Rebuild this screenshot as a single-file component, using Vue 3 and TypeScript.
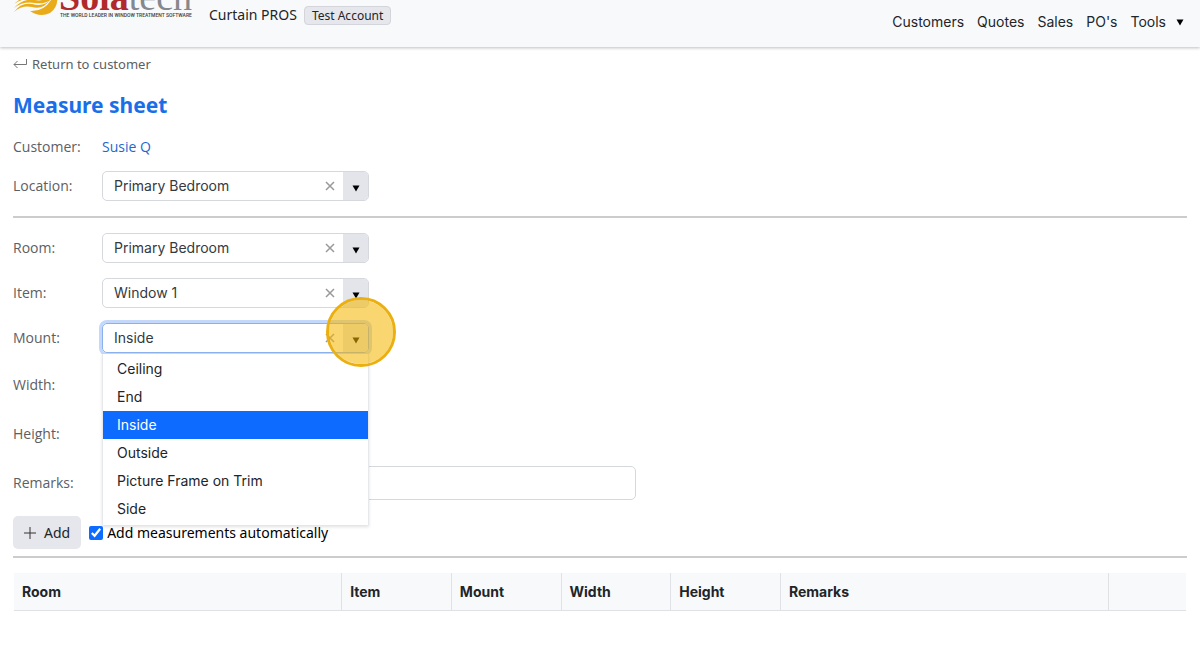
<script setup lang="ts">
import { reactive, ref } from 'vue'

type FieldKey = 'room' | 'item' | 'mount'

interface ComboField {
  key: FieldKey
  label: string
}

const navLinks: string[] = ['Customers', 'Quotes', 'Sales', "PO's"]
const location = ref('Primary Bedroom')
const fields: ComboField[] = [
  { key: 'room', label: 'Room:' },
  { key: 'item', label: 'Item:' },
  { key: 'mount', label: 'Mount:' },
]
const values = reactive<Record<FieldKey, string>>({
  room: 'Primary Bedroom',
  item: 'Window 1',
  mount: 'Inside',
})
const mountOptions: string[] = ['Ceiling', 'End', 'Inside', 'Outside', 'Picture Frame on Trim', 'Side']
const mountOpen = ref(true)
const width = ref('')
const height = ref('')
const remarks = ref('')
const autoAdd = ref(true)
const columns: string[] = ['Room', 'Item', 'Mount', 'Width', 'Height', 'Remarks', '']

function toggle(key: FieldKey): void {
  if (key === 'mount') mountOpen.value = !mountOpen.value
}

function choose(option: string): void {
  values.mount = option
  mountOpen.value = false
}
</script>

<template>
  <header class="topbar">
    <div class="brand">
      <svg class="logo" viewBox="0 0 184 42" role="img" aria-label="Solatech">
        <path class="gold" d="M1 26Q8 19 22 16L30 17Q12 19 1 26Z" />
        <path class="gold" d="M1 30Q10 20 22 22Q32 24 38 16L42 18Q34 27 22 25Q10 23 1 30Z" />
        <path class="gold" d="M1 34Q8 24 19 26Q31 29 37 22Q30 32 19 29Q9 27 1 34Z" />
        <path class="gold" d="M17 33Q34 34 41 16H44Q46 29 37 35Q27 40 17 33Z" />
        <text class="word" x="46" y="32"><tspan class="sola">Sola</tspan><tspan class="tech">tech</tspan></text>
        <text class="tagline" x="47" y="39">THE WORLD LEADER IN WINDOW TREATMENT SOFTWARE</text>
      </svg>
      <span class="company">Curtain PROS</span>
      <span class="badge">Test Account</span>
    </div>
    <nav class="nav" aria-label="Main">
      <a v-for="link in navLinks" :key="link" href="#">{{ link }}</a>
      <button type="button" class="tools">
        Tools
        <svg viewBox="0 0 8 7" aria-hidden="true"><path d="M0.5 0.5H7.5L4 6.5Z" /></svg>
      </button>
    </nav>
  </header>

  <main class="page">
    <a class="return" href="#">
      <svg viewBox="0 0 14 12" aria-hidden="true"><path d="M13.5 1V6.5H1M4.5 3L1 6.5L4.5 10" /></svg>
      Return to customer
    </a>
    <h1>Measure sheet</h1>

    <section class="group summary">
      <div class="row">
        <span class="label">Customer:</span>
        <a class="name" href="#">Susie Q</a>
      </div>
      <div class="row">
        <label class="label" for="location">Location:</label>
        <div class="combo">
          <input id="location" v-model="location" type="text" role="combobox" aria-expanded="false" />
          <button type="button" class="clear" aria-label="Clear location" @click="location = ''">
            <svg viewBox="0 0 10 10" aria-hidden="true"><path d="M1 1L9 9M9 1L1 9" /></svg>
          </button>
          <button type="button" class="arrow" aria-label="Show locations">
            <svg viewBox="0 0 8 7" aria-hidden="true"><path d="M0.5 0.5H7.5L4 6.5Z" /></svg>
          </button>
        </div>
      </div>
    </section>

    <section class="group details">
      <div v-for="field in fields" :key="field.key" class="row">
        <label class="label" :for="field.key">{{ field.label }}</label>
        <div class="combo" :class="{ focused: field.key === 'mount' }">
          <input
            :id="field.key"
            v-model="values[field.key]"
            type="text"
            role="combobox"
            :aria-expanded="field.key === 'mount' && mountOpen"
          />
          <button type="button" class="clear" :aria-label="'Clear ' + field.key" @click="values[field.key] = ''">
            <svg viewBox="0 0 10 10" aria-hidden="true"><path d="M1 1L9 9M9 1L1 9" /></svg>
          </button>
          <button type="button" class="arrow" :aria-label="'Show choices for ' + field.key" @click="toggle(field.key)">
            <svg viewBox="0 0 8 7" aria-hidden="true"><path d="M0.5 0.5H7.5L4 6.5Z" /></svg>
          </button>
          <ul v-if="field.key === 'mount' && mountOpen" class="menu" role="listbox" aria-label="Mount">
            <li
              v-for="option in mountOptions"
              :key="option"
              role="option"
              :aria-selected="option === values.mount"
              :class="{ selected: option === values.mount }"
              @click="choose(option)"
            >
              {{ option }}
            </li>
          </ul>
          <span v-if="field.key === 'mount'" class="click-ring" aria-hidden="true"></span>
        </div>
      </div>
      <div class="row">
        <label class="label" for="width">Width:</label>
        <input id="width" v-model="width" class="text short" type="text" />
      </div>
      <div class="row">
        <label class="label" for="height">Height:</label>
        <input id="height" v-model="height" class="text short" type="text" />
      </div>
      <div class="row">
        <label class="label" for="remarks">Remarks:</label>
        <input id="remarks" v-model="remarks" class="text" type="text" />
      </div>
      <div class="actions">
        <button type="button" class="add">
          <svg viewBox="0 0 12 12" aria-hidden="true"><path d="M6 0V12M0 6H12" /></svg>
          Add
        </button>
        <label class="auto">
          <input v-model="autoAdd" type="checkbox" />
          Add measurements automatically
        </label>
      </div>
    </section>

    <table class="sheet">
      <thead>
        <tr>
          <th v-for="(column, i) in columns" :key="i" scope="col">{{ column }}</th>
        </tr>
      </thead>
    </table>
  </main>
</template>

<style>
body {
  background: #fff;
}
</style>

<style scoped>
* {
  box-sizing: border-box;
}

.topbar,
.page {
  font-family: "Open Sans", "Noto Sans", sans-serif;
  font-size: 14px;
  line-height: 20px;
  color: #212529;
}

a {
  text-decoration: none;
}

button {
  border: 0;
  margin: 0;
  padding: 0;
  background: none;
  font: inherit;
  color: inherit;
  cursor: pointer;
}

svg {
  display: block;
  flex: none;
}

.topbar {
  display: flex;
  justify-content: space-between;
  height: 47px;
  padding: 0 16px 0 13px;
  background: #f8f9fb;
  box-shadow: 0 1px 3px rgba(0, 0, 0, 0.25);
}

.brand {
  display: flex;
  align-items: flex-start;
  font-family: "Noto Sans", sans-serif;
}

.logo {
  width: 184px;
  height: 42px;
  margin-top: -22px;
  margin-right: 12px;
}

.gold {
  fill: #e9ab17;
}

.word {
  font-family: "Liberation Serif", serif;
  font-size: 38px;
}

.sola {
  font-weight: 700;
  fill: #b02a2c;
}

.tech {
  fill: #85888c;
}

.tagline {
  font-family: Roboto, sans-serif;
  font-size: 5px;
  font-weight: 500;
  fill: #3c3e42;
}

.company {
  margin-top: 5px;
}

.badge {
  margin: 6px 0 0 7px;
  padding: 0 7px;
  border: 1px solid #d3d5db;
  border-radius: 4px;
  background: #e6e7ec;
  font-size: 12px;
  line-height: 17px;
}

.nav {
  display: flex;
  gap: 13px;
  height: 32px;
  padding-top: 12px;
  font-family: Inter, sans-serif;
}

.nav a {
  color: inherit;
}

.tools {
  display: flex;
  align-items: center;
  gap: 10px;
}

.tools svg {
  width: 8px;
  height: 7px;
}

.page {
  padding: 7px 13px;
}

.return {
  display: inline-flex;
  align-items: center;
  gap: 5px;
  font-family: "Noto Sans", sans-serif;
  font-size: 13px;
  color: #5c6064;
}

.return svg {
  width: 14px;
  height: 12px;
  fill: none;
  stroke: #777;
}

h1 {
  margin: 16px 0 18px;
  font-family: "Noto Sans", sans-serif;
  font-size: 21px;
  line-height: 28px;
  font-weight: 700;
  color: #1a6fe8;
}

.group {
  display: flex;
  flex-direction: column;
  gap: 15px;
  padding-bottom: 15px;
  border-bottom: 2px solid #ccc;
}

.summary {
  gap: 14px;
}

.details {
  padding: 15px 0 7px;
}

.row {
  display: grid;
  grid-template-columns: 89px minmax(0, 1fr);
  align-items: center;
}

.label {
  color: #5c6064;
}

.name {
  color: #1b68cf;
}

.combo {
  position: relative;
  display: flex;
  width: 267px;
  height: 30px;
  border: 1px solid #d5d8dd;
  border-radius: 5px;
  font-family: Inter, sans-serif;
}

.combo input {
  flex: 1;
  min-width: 0;
  padding: 0 0 0 11px;
  border: 0;
  outline: 0;
  background: none;
  font: inherit;
  color: #343a40;
}

.clear {
  display: grid;
  place-items: center;
  width: 26px;
}

.clear svg {
  width: 10px;
  height: 10px;
  stroke: #999;
  stroke-width: 1.5;
}

.arrow {
  display: grid;
  place-items: center;
  width: 25px;
  padding-top: 4px;
  border-radius: 0 4px 4px 0;
  background: #e4e5eb;
}

.arrow svg {
  width: 8px;
  height: 7px;
}

.focused {
  border-color: #8bb0ee;
  box-shadow: 0 0 0 3px #c4d8fb;
}

.menu {
  position: absolute;
  z-index: 1;
  top: 30px;
  left: -1px;
  right: -1px;
  margin: 0;
  padding: 1px 0 2px;
  border: solid #e6e8ec;
  border-width: 0 1px;
  list-style: none;
  background: #fff;
  box-shadow: 0 2px 3px rgba(0, 0, 0, 0.12);
  color: #212529;
}

.menu li {
  height: 28px;
  padding: 0 14px;
  line-height: 28px;
}

.menu .selected {
  background: #0d6bff;
  color: #fff;
}

.click-ring {
  position: absolute;
  z-index: 2;
  top: -27px;
  right: -28px;
  width: 70px;
  height: 70px;
  border: 3px solid #ebb010;
  border-radius: 50%;
  background: rgba(244, 182, 0, 0.56);
  background-clip: padding-box;
  pointer-events: none;
}

.text {
  width: 100%;
  max-width: 534px;
  height: 34px;
  padding: 0 11px;
  border: 1px solid #d5d8dd;
  border-radius: 5px;
  background: #fff;
  font: inherit;
}

.short {
  max-width: 120px;
}

.actions {
  display: flex;
  align-items: center;
  gap: 8px;
  margin-top: 1px;
  font-family: "Noto Sans", sans-serif;
}

.add {
  display: flex;
  align-items: center;
  gap: 8px;
  height: 33px;
  padding: 0 11px;
  border-radius: 5px;
  background: #e6e7ec;
}

.add svg {
  width: 12px;
  height: 12px;
  stroke: #333;
}

.auto {
  display: flex;
  align-items: center;
  gap: 4px;
  color: #000;
}

.auto input {
  width: 14px;
  height: 14px;
  margin: 0;
  accent-color: #0d6bff;
}

.sheet {
  width: calc(100% - 2px);
  margin: 15px 1px 0;
  border-spacing: 0;
  table-layout: fixed;
  font-family: Inter, sans-serif;
}

.sheet th {
  width: 9.36%;
  height: 38px;
  padding: 0 8px;
  border-right: 1px solid #dfe1e5;
  border-bottom: 1px solid #dfe1e5;
  background: #f8f9fb;
  font-weight: 700;
  text-align: left;
}

.sheet th:first-child,
.sheet th:nth-child(6) {
  width: 28%;
}

.sheet th:last-child {
  width: auto;
  border-right: 0;
}
</style>
